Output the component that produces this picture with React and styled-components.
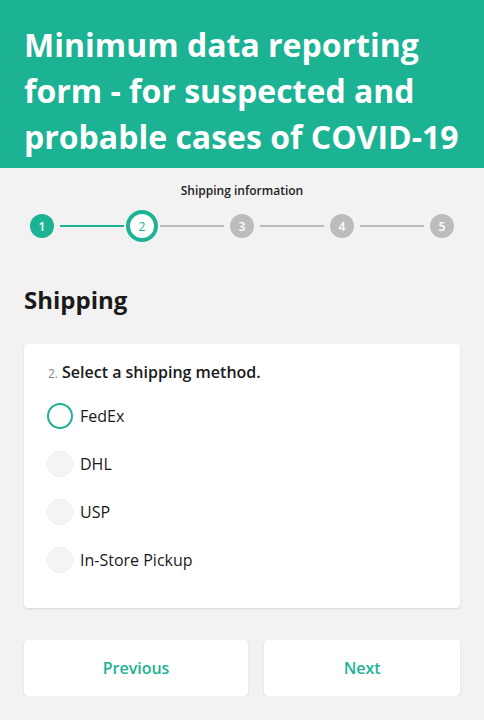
import React, { useState } from 'react';
import styled, { createGlobalStyle, css } from 'styled-components';

const GREEN = '#1bb394';

const GlobalStyle = createGlobalStyle`
  body {
    margin: 0;
    background: #f2f2f2;
    font-family: "Open Sans", "Noto Sans", sans-serif;
    color: #1a1a1a;
  }
`;

const Header = styled.header`
  background: ${GREEN};
  padding: 22px 24px 8px;
  h1 {
    margin: 0;
    color: #fff;
    font-size: 32px;
    line-height: 46px;
    font-weight: 700;
  }
`;

const Progress = styled.div`
  padding: 14px 24px 0;
`;

const StepTitle = styled.div`
  text-align: center;
  font-size: 12px;
  line-height: 18px;
  font-weight: 600;
  color: #222;
`;

const Steps = styled.div`
  display: flex;
  align-items: center;
  justify-content: space-between;
  height: 32px;
  margin-top: 10px;
  padding: 0 6px;
`;

const Dot = styled.div`
  width: 24px;
  height: 24px;
  border-radius: 50%;
  flex: none;
  box-sizing: border-box;
  display: flex;
  align-items: center;
  justify-content: center;
  font-size: 12px;
  font-weight: 600;
  color: #fff;
  background: #bcbcbc;
  ${p => p.done && css`
    background: ${GREEN};
  `}
  ${p => p.current && css`
    width: 32px;
    height: 32px;
    margin: 0 -4px;
    background: #fff;
    border: 4px solid ${GREEN};
    color: ${GREEN};
    font-weight: 400;
  `}
`;

const Line = styled.div`
  flex: 1;
  height: 2px;
  margin: 0 6px;
  background: ${p => (p.done ? GREEN : '#bcbcbc')};
`;

const Main = styled.main`
  padding: 0 24px;
`;

const SectionTitle = styled.h2`
  margin: 41px 0 27px;
  font-size: 24px;
  line-height: 34px;
  font-weight: 700;
  color: #1a1a1a;
`;

const Card = styled.div`
  background: #fff;
  border-radius: 4px;
  box-shadow: 0 1px 2px rgba(0, 0, 0, 0.12);
  padding: 16px 24px 24px;
`;

const Question = styled.div`
  font-size: 16px;
  line-height: 24px;
  font-weight: 600;
  color: #1a1a1a;
  span {
    font-size: 12px;
    font-weight: 400;
    color: #888;
    margin-right: 4px;
  }
`;

const Options = styled.div`
  margin-top: 6px;
`;

const Option = styled.label`
  display: flex;
  align-items: center;
  height: 48px;
  gap: 7px;
  font-size: 16px;
  color: #1a1a1a;
  cursor: pointer;
`;

const Radio = styled.span`
  width: 26px;
  height: 26px;
  border-radius: 50%;
  box-sizing: border-box;
  flex: none;
  margin-left: -1px;
  background: #f4f4f4;
  border: 1px solid #ececec;
  ${p => p.focused && css`
    background: #fff;
    border: 2px solid ${GREEN};
  `}
`;

const ButtonRow = styled.div`
  display: flex;
  gap: 16px;
  margin-top: 32px;
`;

const NavButton = styled.button`
  flex: ${p => p.grow};
  height: 56px;
  border: none;
  border-radius: 4px;
  background: #fff;
  box-shadow: 0 1px 2px rgba(0, 0, 0, 0.14);
  color: ${GREEN};
  font-family: inherit;
  font-size: 16px;
  font-weight: 600;
  cursor: pointer;
`;

const methods = ['FedEx', 'DHL', 'USP', 'In-Store Pickup'];

export default function App() {
  const [focus] = useState(0);
  const steps = [1, 2, 3, 4, 5];
  const current = 2;

  return (
    <>
      <GlobalStyle />
      <Header>
        <h1>Minimum data reporting form - for suspected and probable cases of COVID-19</h1>
      </Header>
      <Progress>
        <StepTitle>Shipping information</StepTitle>
        <Steps>
          {steps.map((n, i) => (
            <React.Fragment key={n}>
              {i > 0 && <Line done={n <= current} />}
              <Dot done={n < current} current={n === current}>{n}</Dot>
            </React.Fragment>
          ))}
        </Steps>
      </Progress>
      <Main>
        <SectionTitle>Shipping</SectionTitle>
        <Card>
          <Question><span>2.</span>Select a shipping method.</Question>
          <Options>
            {methods.map((m, i) => (
              <Option key={m}>
                <Radio focused={i === focus} />
                {m}
              </Option>
            ))}
          </Options>
        </Card>
        <ButtonRow>
          <NavButton grow={225}>Previous</NavButton>
          <NavButton grow={195}>Next</NavButton>
        </ButtonRow>
      </Main>
    </>
  );
}
